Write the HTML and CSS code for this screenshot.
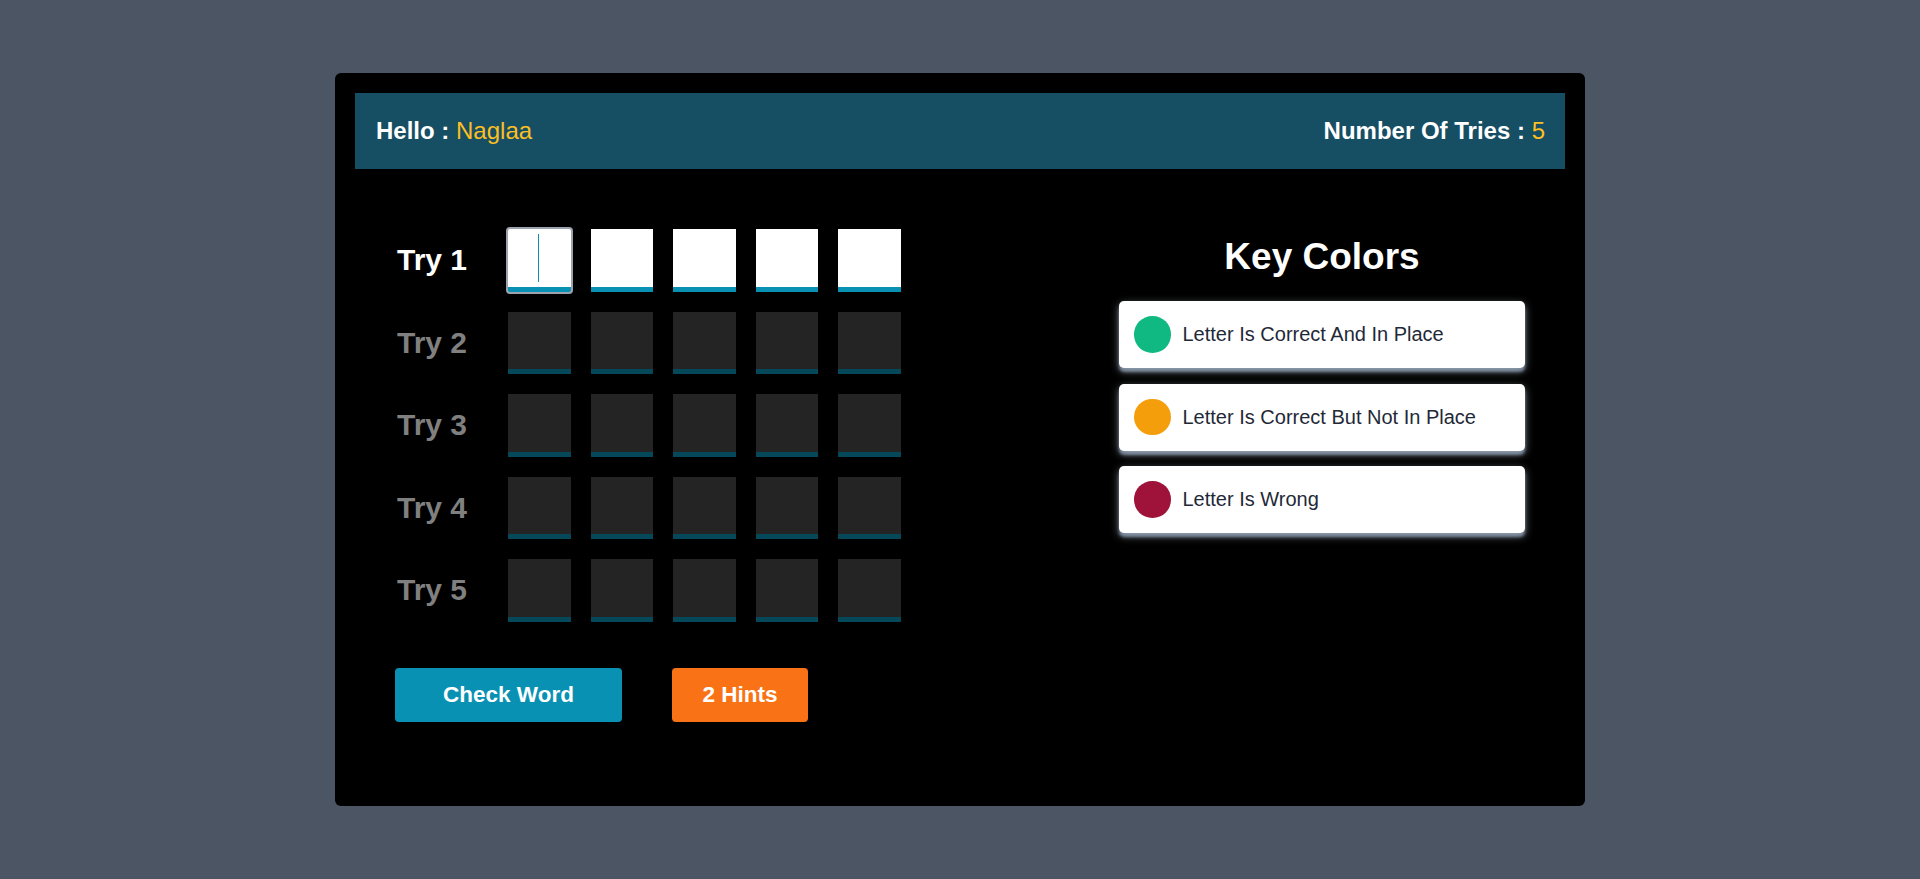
FILE: index.html
```html
<!DOCTYPE html>
<html lang="en">
<head>
<meta charset="utf-8">
<title>Guess The Word</title>
<link rel="stylesheet" href="styles.css">
</head>
<body>
<div class="game-card">
  <header class="top-bar">
    <div class="hello"><b>Hello :</b> <span class="accent">Naglaa</span></div>
    <div class="tries-count"><b>Number Of Tries :</b> <span class="accent">5</span></div>
  </header>
  <main class="main">
    <section class="game">
      <div class="inputs">
        <div class="try-row">
          <span class="try-label">Try 1</span>
          <div class="box focused"><span class="caret"></span></div>
          <div class="box"></div>
          <div class="box"></div>
          <div class="box"></div>
          <div class="box"></div>
        </div>
        <div class="try-row disabled">
          <span class="try-label">Try 2</span>
          <div class="box"></div><div class="box"></div><div class="box"></div><div class="box"></div><div class="box"></div>
        </div>
        <div class="try-row disabled">
          <span class="try-label">Try 3</span>
          <div class="box"></div><div class="box"></div><div class="box"></div><div class="box"></div><div class="box"></div>
        </div>
        <div class="try-row disabled">
          <span class="try-label">Try 4</span>
          <div class="box"></div><div class="box"></div><div class="box"></div><div class="box"></div><div class="box"></div>
        </div>
        <div class="try-row disabled">
          <span class="try-label">Try 5</span>
          <div class="box"></div><div class="box"></div><div class="box"></div><div class="box"></div><div class="box"></div>
        </div>
      </div>
      <div class="controls">
        <button class="btn check">Check Word</button>
        <button class="btn hint">2 Hints</button>
      </div>
    </section>
    <aside class="key-colors">
      <h2 class="key-title">Key Colors</h2>
      <div class="key-item"><span class="dot green"></span><span class="key-text">Letter Is Correct And In Place</span></div>
      <div class="key-item"><span class="dot orange"></span><span class="key-text">Letter Is Correct But Not In Place</span></div>
      <div class="key-item"><span class="dot red"></span><span class="key-text">Letter Is Wrong</span></div>
    </aside>
  </main>
</div>
</body>
</html>
```

FILE: styles.css
```css
* { box-sizing: border-box; }

html, body {
  margin: 0;
  padding: 0;
}

body {
  background: #4b5563;
  font-family: "Liberation Sans", Arial, sans-serif;
  min-height: 879px;
  padding-top: 73px;
}

.game-card {
  width: 1250px;
  height: 733px;
  margin: 0 auto;
  background: #000;
  border-radius: 6px;
  padding: 20px;
}

.top-bar {
  height: 76px;
  background: #164e63;
  display: flex;
  align-items: center;
  justify-content: space-between;
  padding: 0 20px 0 21px;
  font-size: 24px;
  color: #fff;
}

.top-bar b { font-weight: 700; }

.accent { color: #fbbf24; }

.main {
  display: flex;
  justify-content: space-between;
  padding: 60px 40px 0 42px;
}

.inputs {
  display: flex;
  flex-direction: column;
  gap: 20px;
}

.try-row {
  display: flex;
  align-items: center;
  gap: 20px;
}

.try-label {
  width: 91px;
  font-size: 30px;
  font-weight: 700;
  color: #fff;
}

.box {
  position: relative;
  width: 62.5px;
  height: 62.5px;
  background: #fff;
  border-bottom: 5px solid #0891b2;
}

.box.focused::after {
  content: "";
  position: absolute;
  left: -2px;
  top: -2px;
  right: -2px;
  bottom: -7px;
  border: 2px solid #9ca3af;
  border-radius: 4px;
}

.caret {
  position: absolute;
  left: 30px;
  top: 5px;
  width: 1px;
  height: 48px;
  background: #0891b2;
}

.try-row.disabled .try-label { color: #808080; }

.try-row.disabled .box {
  background: #242424;
  border-bottom-color: #044859;
}

.controls {
  display: flex;
  gap: 50px;
  margin-top: 46px;
  margin-left: -2px;
}

.btn {
  height: 54px;
  border: 0;
  border-radius: 4px;
  color: #fff;
  font-family: "Liberation Sans", Arial, sans-serif;
  font-size: 22.5px;
  font-weight: 700;
  padding: 0;
  cursor: pointer;
}

.btn.check { width: 227px; background: #0891b2; }
.btn.hint { width: 136px; background: #f97316; }

.key-colors {
  width: 406px;
  padding-top: 7px;
  display: flex;
  flex-direction: column;
  gap: 15.5px;
}

.key-title {
  margin: 0 0 7px;
  text-align: center;
  color: #fff;
  font-size: 37px;
  font-weight: 700;
  line-height: 42.5px;
}

.key-item {
  height: 67px;
  background: #fff;
  border-radius: 5px;
  display: flex;
  align-items: center;
  gap: 12px;
  padding: 0 15px;
  box-shadow: 0 3px 8px rgba(203, 213, 225, 0.55), 0 4px 3px rgba(100, 116, 139, 0.9);
}

.dot {
  width: 36.5px;
  height: 36.5px;
  border-radius: 50%;
  flex: none;
}

.dot.green { background: #10b981; }
.dot.orange { background: #f59e0b; }
.dot.red { background: #9f1239; }

.key-text {
  font-size: 20px;
  color: #1f2937;
}
```
